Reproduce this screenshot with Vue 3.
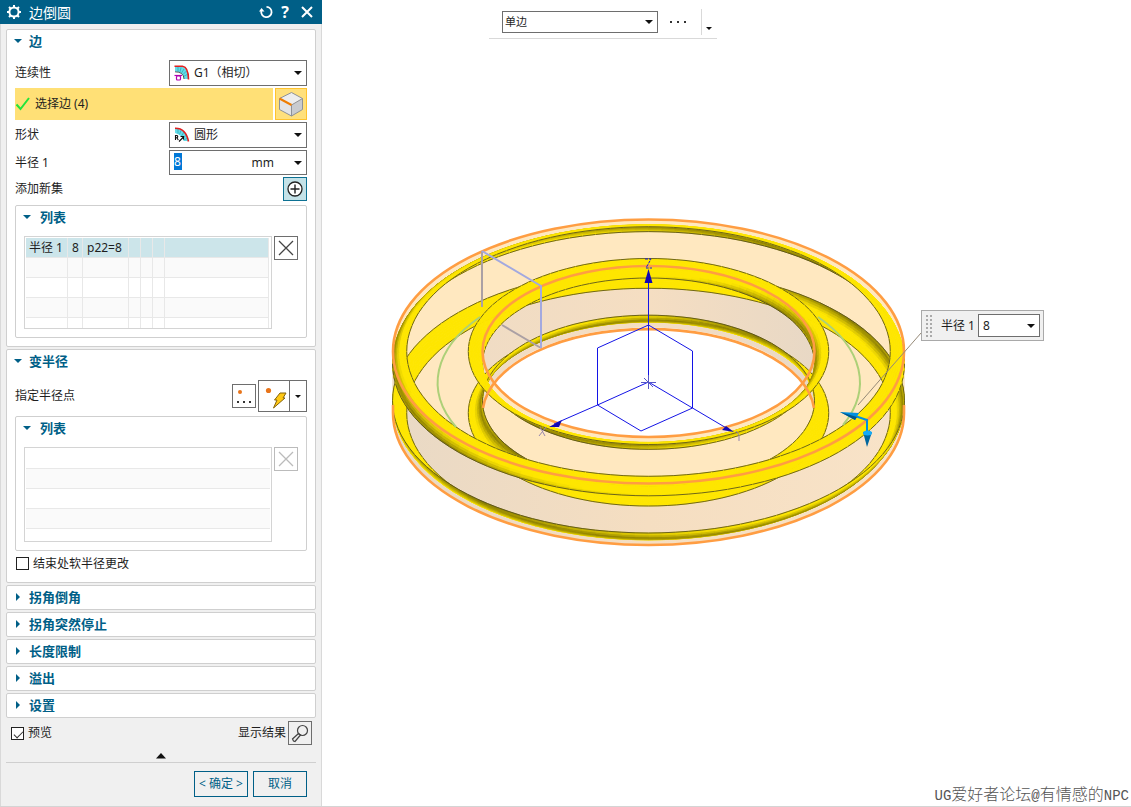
<script setup>
import { ref } from 'vue'

const continuity = ref('G1')
const shape = ref('round')
const radius = ref('8')
const softEnd = ref(false)
const preview = ref(true)
const collapsed = ['拐角倒角', '拐角突然停止', '长度限制', '溢出', '设置']
const listRows = [
  ['半径 1', '8', 'p22=8', '', '', '', ''],
  ['', '', '', '', '', '', ''],
  ['', '', '', '', '', '', ''],
  ['', '', '', '', '', '', ''],
  ['', '', '', '', '', '', '']
]

// Ring model: four blended edges projected from an elevated camera.
const CX = 648.5
const CY = 351.5
const SIN = 0.516
const COS = 0.857
const HEIGHT = 71.8
const BLEND = 14.2
const light = [0.42, 0.45, 0.8]

function project(rad, a, z) {
  return [CX + rad * Math.cos(a), CY + rad * Math.sin(a) * SIN - z * COS]
}
function depth(rad, a, z) {
  return rad * Math.sin(a) * COS + z * SIN
}
function fmt(p) {
  return p[0].toFixed(1) + ' ' + p[1].toFixed(1)
}
function buildFacets() {
  const edges = [
    { r: 256, z: 0, dr: -1, dz: -1 },
    { r: 166, z: 0, dr: 1, dz: -1 },
    { r: 256, z: -HEIGHT, dr: -1, dz: 1 },
    { r: 166, z: -HEIGHT, dr: 1, dz: 1 }
  ]
  const around = 120
  const across = 9
  const out = []
  for (const e of edges) {
    const at = t => ({
      rad: e.r + e.dr * BLEND * (1 - Math.sin(t)),
      z: e.z + e.dz * BLEND * (1 - Math.cos(t))
    })
    for (let i = 0; i < around; i++) {
      const a0 = (i / around) * Math.PI * 2
      const a1 = ((i + 1) / around) * Math.PI * 2
      const am = (a0 + a1) / 2
      for (let j = 0; j < across; j++) {
        const t0 = (j / across) * Math.PI / 2
        const t1 = ((j + 1) / across) * Math.PI / 2
        const tm = (t0 + t1) / 2
        const p0 = at(t0)
        const p1 = at(t1)
        const pm = at(tm)
        const nr = -e.dr * Math.sin(tm)
        const nz = -e.dz * Math.cos(tm)
        const lit = Math.abs(nr * Math.cos(am) * light[0] + nr * Math.sin(am) * light[1] + nz * light[2])
        const k = Math.min(1, 0.56 + lit * 0.85)
        const colour = `rgb(${Math.round(254 * k)},${Math.round(230 * k)},0)`
        out.push({
          d: 'M' + [project(p0.rad, a0, p0.z), project(p0.rad, a1, p0.z), project(p1.rad, a1, p1.z), project(p1.rad, a0, p1.z)].map(fmt).join('L') + 'Z',
          fill: colour,
          stroke: colour,
          depth: depth(pm.rad, am, pm.z)
        })
      }
      for (const t of [0, Math.PI / 2]) {
        const p = at(t)
        out.push({
          d: 'M' + fmt(project(p.rad, a0, p.z)) + 'L' + fmt(project(p.rad, a1, p.z)),
          fill: 'none',
          stroke: '#4a4520',
          depth: depth(p.rad, am, p.z) + 3
        })
      }
    }
  }
  return out.sort((a, b) => a.depth - b.depth)
}
const facets = buildFacets()
</script>

<template>
  <div class="app">
    <aside class="dialog">
      <header class="titlebar">
        <svg class="gear" viewBox="0 0 16 16" width="16" height="16">
          <circle cx="8" cy="8" r="4.6" fill="none" stroke="#fff" stroke-width="2" />
          <path d="M8 1v3M8 12v3M1 8h3M12 8h3M3 3l2 2M11 11l2 2M13 3l-2 2M5 11l-2 2" stroke="#fff" stroke-width="2" />
        </svg>
        <h1>边倒圆</h1>
        <button type="button" aria-label="重置">
          <svg viewBox="0 0 14 14" width="14" height="14"><path d="M7.500 1.800A5.200 5.200 0 1 1 2.300 6" fill="none" stroke="#fff" stroke-width="1.800" /><path d="M0 6.500h5.500L2.500 3z" fill="#fff" /></svg>
        </button>
        <button type="button" aria-label="帮助" class="help">?</button>
        <button type="button" aria-label="关闭">
          <svg viewBox="0 0 14 14" width="14" height="14"><path d="M2 2l10 10M12 2L2 12" stroke="#fff" stroke-width="2" /></svg>
        </button>
      </header>

      <div class="body">
        <section class="card">
          <h2><i class="tri down"></i>边</h2>
          <div class="stack">
            <div class="row">
              <label for="continuity">连续性</label>
              <div class="combo">
                <svg class="lead" viewBox="0 0 16 16" width="16" height="16">
                  <path d="M1 1.500h5Q14.500 2 14.500 14H10Q10 6.500 1 6.500z" fill="#63dce8" />
                  <path d="M4 2v4.500M7 2.500L6 7M10 4L7.500 8M12.500 6L9 9.500M14 9L9.500 11.500" stroke="#2aa3b3" stroke-width="0.700" />
                  <path d="M1 6.800Q9.800 6.800 10 14" fill="none" stroke="#333" stroke-width="0.800" />
                  <path d="M0.500 1.200h8Q14.500 2 14.500 14.500" fill="none" stroke="#e02020" stroke-width="1.600" />
                  <path d="M0.500 10.500h7.500" stroke="#b000b0" stroke-width="1.200" /><rect x="2.500" y="11" width="4" height="4" rx="1" fill="#fff" stroke="#b000b0" stroke-width="1.200" />
                </svg>
                <select id="continuity" v-model="continuity" class="with-icon"><option value="G1">G1（相切）</option></select>
                <i class="caret"></i>
              </div>
            </div>
            <div class="row pick">
              <button type="button" class="pick-main">
                <svg viewBox="0 0 16 14" width="16" height="14"><path d="M1.500 7.500l4 4.500L14 1" fill="none" stroke="#22e43a" stroke-width="2" /></svg>
                选择边 (4)
              </button>
              <button type="button" class="pick-cube" aria-label="边规则">
                <svg viewBox="0 0 28 28" width="28" height="28">
                  <path d="M2.500 8.500L14.500 2.500 25.500 8.500 14.500 15z" fill="#ededee" /><path d="M2.500 8.500L14.500 15V26L2.500 19.500z" fill="#e3e4e6" /><path d="M14.500 15L25.500 8.500V19.500L14.500 26z" fill="#c9cbcf" />
                  <path d="M2.500 8.500L14.500 2.500 25.500 8.500V19.500L14.500 26 2.500 19.500zM14.500 15V26M14.500 15L25.500 8.500" fill="none" stroke="#8f9298" />
                  <path d="M2.500 8.500L14.500 15" stroke="#ef7d00" stroke-width="2" />
                </svg>
              </button>
            </div>
            <div class="row">
              <label for="shape">形状</label>
              <div class="combo">
                <svg class="lead" viewBox="0 0 16 16" width="16" height="16">
                  <path d="M1 2h3Q13 4 14.500 14H10Q8 8 1 6z" fill="#63dce8" />
                  <path d="M4 2v4.500M7 3.500L5.500 7.500M10 5L7.500 9M12.500 8L9 11M14 11L9.500 13" stroke="#2aa3b3" stroke-width="0.700" />
                  <path d="M1 1.200Q12 1 14.500 14.500" fill="none" stroke="#e02020" stroke-width="1.600" />
                  <path d="M1.500 13V8.500h1.500q1.500 1.200 0 2.300h-1.500M2.800 10.800L4.300 13M5 14.500l4.500-4.500M6.500 9.500h3v3" fill="none" stroke="#111" stroke-width="1.100" />
                </svg>
                <select id="shape" v-model="shape" class="with-icon"><option value="round">圆形</option></select>
                <i class="caret"></i>
              </div>
            </div>
            <div class="row">
              <label for="radius">半径 1</label>
              <div class="combo value">
                <span class="marked"><input id="radius" v-model="radius" type="text" /></span>
                <span class="unit">mm</span>
                <i class="caret"></i>
              </div>
            </div>
            <div class="row">
              <span>添加新集</span>
              <button type="button" class="add" aria-label="添加新集">
                <svg viewBox="0 0 18 18" width="18" height="18"><circle cx="9" cy="9" r="7" fill="#fff" stroke="#222" stroke-width="1.300" /><path d="M9 4.500v9M4.500 9h9" stroke="#222" stroke-width="1.400" /></svg>
              </button>
            </div>
          </div>
          <div class="group">
            <h3><i class="tri down"></i>列表</h3>
            <div class="list">
              <div class="grid first">
                <table>
                  <colgroup><col class="c42" /><col class="c15" /><col class="c46" /><col class="c12" /><col class="c12" /><col class="c12" /><col /></colgroup>
                  <tbody>
                    <tr v-for="(r, i) in listRows" :key="i" :class="{ on: i === 0 }">
                      <td v-for="(c, j) in r" :key="j">{{ c }}</td>
                    </tr>
                  </tbody>
                </table>
              </div>
              <button type="button" class="square" aria-label="移除">
                <svg viewBox="0 0 16 16" width="16" height="16"><path d="M1 1l14 14M15 1L1 15" stroke="#444" stroke-width="1.300" /></svg>
              </button>
            </div>
          </div>
        </section>

        <section class="card variable">
          <h2><i class="tri down"></i>变半径</h2>
          <div class="row">
            <span>指定半径点</span>
            <div class="points">
              <button type="button" class="square" aria-label="点对话框">
                <svg viewBox="0 0 22 22" width="22" height="22"><circle cx="7" cy="7" r="2" fill="#e8741a" /><path d="M4 16h2v2H4zM10 16h2v2h-2zM16 16h2v2h-2z" fill="#333" /></svg>
              </button>
              <div class="split">
                <button type="button" aria-label="自动判断的点">
                  <svg viewBox="0 0 30 30" width="30" height="30"><circle cx="9.500" cy="9.500" r="2.600" fill="#e8741a" /><path d="M21 12h6l-3 5h2L14.500 27l3.500-8h-2.500z" fill="#ffc814" stroke="#85630a" /></svg>
                </button>
                <button type="button" class="drop" aria-label="更多点类型"><i class="caret small"></i></button>
              </div>
            </div>
          </div>
          <div class="group">
            <h3><i class="tri down"></i>列表</h3>
            <div class="list">
              <div class="grid second">
                <table><tbody><tr v-for="n in 5" :key="n"><td></td></tr></tbody></table>
              </div>
              <button type="button" class="square off" disabled aria-label="移除">
                <svg viewBox="0 0 16 16" width="16" height="16"><path d="M1 1l14 14M15 1L1 15" stroke="#bbb" stroke-width="1.300" /></svg>
              </button>
            </div>
          </div>
          <label class="check soft"><input v-model="softEnd" type="checkbox" />结束处软半径更改</label>
        </section>

        <section v-for="name in collapsed" :key="name" class="card closed">
          <h2><i class="tri right"></i>{{ name }}</h2>
        </section>

        <div class="preview">
          <label class="check"><input v-model="preview" type="checkbox" />预览</label>
          <label class="result" for="show-result">显示结果</label>
          <button id="show-result" type="button" class="square">
            <svg viewBox="0 0 20 20" width="20" height="20"><circle cx="12.500" cy="7.500" r="5" fill="none" stroke="#444" stroke-width="1.200" /><path d="M8.500 10.500L2.500 16l1 2 1.500.5 5.500-6.500z" fill="none" stroke="#444" stroke-width="1.200" /></svg>
          </button>
        </div>
        <button type="button" class="fold" aria-label="折叠"><svg viewBox="0 0 10 6" width="10" height="6"><path d="M5 0l5 5.500H0z" fill="#111" /></svg></button>
        <footer>
          <button type="button">&lt; 确定 &gt;</button>
          <button type="button">取消</button>
        </footer>
      </div>
    </aside>

    <main class="stage">
      <svg class="scene" viewBox="322 0 809 807" width="809" height="807">
        <defs>
          <linearGradient id="outerWall"><stop offset="0" stop-color="#e9d9c5" /><stop offset="0.5" stop-color="#f5dec1" /><stop offset="1" stop-color="#f8e3c8" /></linearGradient>
          <linearGradient id="innerWall"><stop offset="0" stop-color="#f0dcc4" /><stop offset="0.5" stop-color="#f5dec2" /><stop offset="1" stop-color="#e8d8c5" /></linearGradient>
        </defs>
        <path fill="#ffe8c0" fill-rule="evenodd" d="M392.500 351.500A256 132 0 0 1 904.500 351.500V413A256 132 0 0 1 392.500 413ZM493.600 382.200A166 85.500 0 0 1 803.400 382.200A166 85.500 0 0 1 493.600 382.200Z" />
        <path fill="url(#outerWall)" d="M392.500 363A256 132 0 0 0 904.500 363V413A256 132 0 0 1 392.500 413Z" />
        <path fill="url(#innerWall)" d="M482.500 363A166 85.500 0 0 1 814.500 363V413A166 85.500 0 0 0 482.500 413Z" />
        <path fill="#fff" d="M493.600 382.200A166 85.500 0 0 1 803.400 382.200A166 85.500 0 0 1 493.600 382.200Z" />
        <path v-for="(f, i) in facets" :key="i" :d="f.d" :fill="f.fill" :stroke="f.stroke" stroke-width="0.8" />

        <g fill="none" stroke="#add078" stroke-width="2">
          <path d="M480 317A211 109 0 0 0 456 427" />
          <path d="M818 317A211 109 0 0 1 843 425" />
        </g>
        <g fill="none" stroke="#ff9d42" stroke-width="2.600">
          <ellipse cx="648.500" cy="351.500" rx="255.500" ry="132" />
          <ellipse cx="648.500" cy="351.500" rx="166" ry="85.500" />
          <path d="M393 405V413A255.500 132 0 0 0 904 413V405" />
          <path d="M483 408A166 85.500 0 0 1 814 408" />
        </g>
        <g fill="none" stroke-width="2">
          <path d="M482 251V307M502 325L541 348" stroke="#aba0a4" />
          <path d="M482 251L541 286V348" stroke="#a3a9df" />
        </g>
        <g fill="none" stroke="#1414e6" stroke-width="1">
          <path d="M648.500 278V382M648.500 325L692.500 351V408L641 431 597.500 405V348ZM648.500 382L597.500 405 554 424M648.500 382L692.500 408 728 429" />
          <path d="M641 382.500H656M648.500 375V389M644 378l9 9" stroke="#5656c8" />
          <path d="M645 259h6l-5 9h6" stroke-dasharray="3 1" /><path d="M540 427l5 9M546 427l-7 9M736 431l3 4M739 435v6" stroke="#9686ad" />
        </g>
        <path d="M648.500 269l4 14h-8zM549 427l13-7-3 7zM734 432l-8-6-4 4z" fill="#1208b4" />
        <path d="M921 333L858 405" stroke="#968a78" fill="none" />
        <path d="M855 416l12 4v13" fill="none" stroke="#0090e0" stroke-width="2" />
        <path d="M840 412l19 1-4 7z" fill="#0090df" /><path d="M840 412l15 8 2-3z" fill="#00578b" />
        <path d="M863 432h9l-5 15z" fill="#00669e" /><ellipse cx="867.500" cy="433" rx="4.500" ry="2.500" fill="#16aaf5" />
      </svg>

      <div class="toolbar">
        <div class="combo">
          <select aria-label="曲线规则"><option>单边</option></select>
          <i class="caret"></i>
        </div>
        <button type="button" class="more" aria-label="更多"><i></i><i></i><i></i></button>
        <button type="button" class="overflow" aria-label="工具条选项"><i class="caret small"></i></button>
      </div>

      <div class="dimension">
        <i class="grip"></i>
        <label for="dim">半径 1</label>
        <div class="combo">
          <input id="dim" v-model="radius" type="text" />
          <i class="caret"></i>
        </div>
      </div>

      <p class="mark"><span>UG</span>爱好者论坛<span>@</span>有情感的<span>NPC</span></p>
    </main>
  </div>
</template>

<style>
body { margin: 0; background: #fff; }
</style>

<style scoped>
.app, .app * { box-sizing: border-box; }
.app {
  display: flex;
  min-height: 100vh;
  overflow: hidden;
  font: 12px/16px "Noto Sans", "Noto Sans CJK SC", sans-serif;
  color: #1e1e1e;
}
button, select, input { font: inherit; color: inherit; margin: 0; padding: 0; border-radius: 0; }
button { display: flex; align-items: center; justify-content: center; border: 0; background: none; }
svg { display: block; flex: none; }
h1, h2, h3, p { margin: 0; }

.dialog {
  flex: none;
  width: 322px;
  display: flex;
  flex-direction: column;
  background: #f0f0f0;
  border-bottom: 1px solid #d4d4d4;
}
.titlebar {
  height: 24px;
  display: flex;
  align-items: center;
  gap: 7px;
  padding: 0 8px 0 6px;
  background: #005f87;
  color: #fff;
}
.titlebar h1 { flex: 1; font-size: 14px; line-height: 20px; font-weight: 400; padding-top: 2px; }
.titlebar .help { width: 10px; margin-right: 3px; font: bold 16px/20px "Noto Sans", sans-serif; }
.body {
  flex: 1;
  display: flex;
  flex-direction: column;
  gap: 2px;
  padding: 5px 5px 0;
  border: solid #d9d9d9;
  border-width: 0 1px;
}
.card { background: #fff; border: 1px solid #cfcfcf; border-radius: 2px; padding: 0 8px 8px; }
.card.variable { padding-bottom: 6px; }
.card.closed { padding-bottom: 0; }
h2, h3 {
  display: flex;
  align-items: center;
  height: 24px;
  margin-bottom: 6px;
  padding-bottom: 2px;
  font-size: 13px;
  line-height: 18px;
  font-weight: 700;
  color: #005f87;
}
.closed h2 { height: 23px; margin: 0; }
.tri { flex: none; width: 14px; height: 8px; }
.tri::before { content: ""; display: block; width: 0; height: 0; }
.tri.down::before { border: 4px solid transparent; border-top-color: #005f87; border-bottom: 0; margin: 2px 0 0 -1px; }
.tri.right::before { border: 4px solid transparent; border-left-color: #005f87; border-right: 0; margin-left: 1px; }
.group .tri { width: 16px; }

.stack { display: flex; flex-direction: column; gap: 2px; }
.row { display: flex; align-items: center; justify-content: space-between; }
.combo { position: relative; display: flex; align-items: center; width: 138px; height: 26px; border: 1px solid #6e6e6e; background: #fff; }
.combo select, .combo input { width: 100%; height: 100%; appearance: none; border: 0; outline: 0; background: transparent; padding: 0 20px 0 4px; }
.combo select.with-icon { padding-left: 24px; }
.lead { position: absolute; left: 4px; top: 4px; }
.caret { position: absolute; right: 4px; top: 50%; margin-top: -2px; border: 4px solid transparent; border-top-color: #111; border-bottom: 0; }
.caret.small { position: static; margin: 0; border-width: 3px 3px 0; }
.combo.value { height: 25px; padding-left: 4px; }
.marked { width: 8px; height: 17px; background: #0078d7; color: #fff; margin-bottom: 2px; }
.marked input { display: block; padding: 0; }
.unit { margin-left: auto; padding-right: 32px; }

.pick { gap: 2px; }
.pick-main { flex: 1; height: 32px; justify-content: flex-start; gap: 4px; background: #ffe076; }
.pick-cube { width: 32px; height: 32px; background: #ffe07c; border: 1px solid #ffc32e; }
.add { width: 24px; height: 24px; background: #c4e2e8; border: 1px solid #0d7193; }

.group { margin-top: 4px; border: 1px solid #cfcfcf; border-radius: 2px; padding: 0 8px 8px; }
.list { display: flex; align-items: flex-start; gap: 2px; }
.grid { flex: 1; border: 1px solid #d4d4d4; padding: 1px; overflow: hidden; }
.grid.first { height: 93px; padding-right: 2px; }
.grid.second { height: 95px; }
table { width: 100%; table-layout: fixed; border-collapse: separate; border-spacing: 0; }
td { height: 20px; padding: 0 0 0 3px; border: solid #e8e8e8; border-width: 0 1px 1px 0; white-space: nowrap; }
td:nth-child(2) { padding-left: 4px; }
td:nth-child(3) { padding-left: 4px; }
tr:nth-child(even) td { background: #fafafa; }
tr.on td { background: #cce5ea; }
.second td { border-right: 0; }
.c42 { width: 42px; }
.c15 { width: 15px; }
.c46 { width: 46px; }
.c12 { width: 12px; }
.square { flex: none; width: 24px; height: 24px; border: 1px solid #6e6e6e; }
.square.off { border-color: #bbb; }

.points { display: flex; align-items: center; gap: 2px; }
.split { display: flex; height: 32px; border: 1px solid #6e6e6e; }
.split .drop { width: 17px; border-left: 1px solid #6e6e6e; }
.check { display: flex; align-items: center; gap: 4px; }
.check.soft { height: 25px; padding-left: 1px; }
.check input { appearance: none; position: relative; width: 13px; height: 13px; border: 1px solid #222; background: #fff; }
.check input:checked::after {
  content: "";
  position: absolute;
  left: 4px;
  top: 1px;
  width: 4px;
  height: 8px;
  border: solid #333;
  border-width: 0 1px 1px 0;
  transform: rotate(45deg);
}
.preview { display: flex; align-items: center; padding: 1px 4px 0 5px; }
.preview .result { margin-left: auto; padding-right: 2px; }
.fold { align-self: center; height: 13px; padding-top: 4px; }
footer { display: flex; justify-content: flex-end; gap: 5px; padding: 8px 9px; border-top: 1px solid #cfcfcf; }
footer button { width: 54px; height: 26px; border: 1px solid #005f87; color: #005f87; white-space: nowrap; }

.stage { flex: 1; min-width: 0; position: relative; overflow: hidden; border-bottom: 1px solid #d4d4d4; }
.scene { position: absolute; left: 0; top: 0; }
.toolbar { position: relative; display: flex; align-items: center; width: 228px; height: 39px; margin-left: 167px; padding: 5px 0 0 13px; border-bottom: 1px solid #d9d9d9; }
.toolbar .combo { width: 156px; height: 22px; }
.toolbar .combo select { padding-left: 2px; font-size: 11px; }
.more { width: 43px; height: 26px; gap: 5px; padding-right: 4px; }
.more i { width: 2px; height: 2px; background: #333; }
.overflow { width: 15px; height: 26px; border-left: 1px solid #d9d9d9; padding: 14px 0 0 0; }
.dimension { position: absolute; left: 599px; top: 310px; display: flex; align-items: center; width: 123px; height: 31px; padding: 0 3px; background: #f0f0f0; border: 1px solid #a9a9a9; }
.grip { width: 7px; height: 23px; margin-right: 9px; background-image: radial-gradient(circle, #aaa 1px, transparent 1px); background-size: 4px 4px; }
.dimension label { flex: 1; white-space: nowrap; }
.dimension .combo { width: 62px; height: 23px; }
.mark { position: absolute; right: 2px; bottom: 0; font: 300 16px/20px "Noto Sans CJK SC", sans-serif; color: #555; white-space: nowrap; }
.mark span { font: 14px/20px "Liberation Mono", monospace; }
</style>
